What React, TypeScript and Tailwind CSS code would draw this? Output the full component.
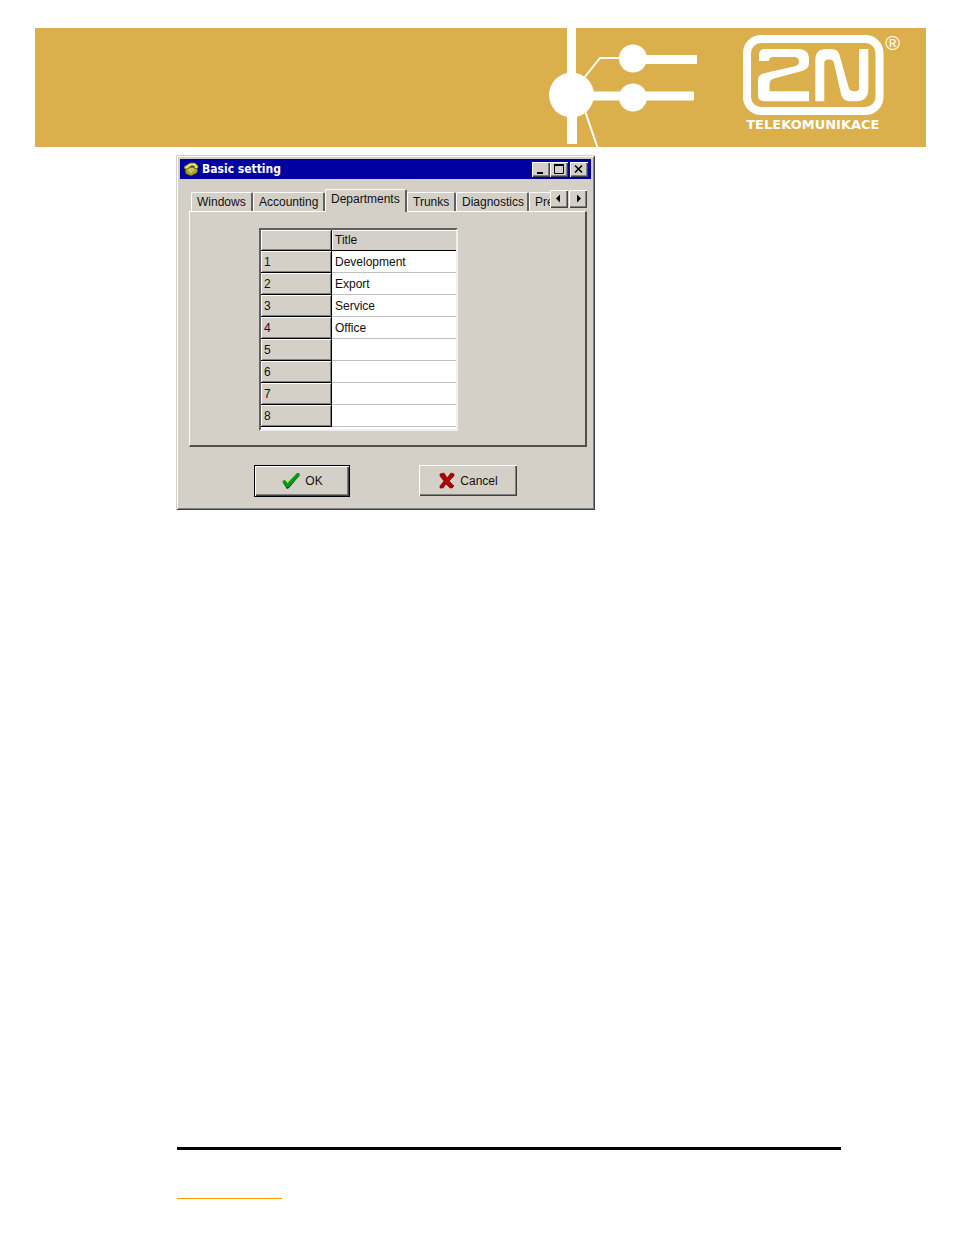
import { useState } from "react";

const tabs = [
  { name: "Windows", width: "w-[62px]" },
  { name: "Accounting", width: "w-[72px]" },
  { name: "Departments", width: "w-[82px]" },
  { name: "Trunks", width: "w-[49px]" },
  { name: "Diagnostics", width: "w-[73px]" },
  { name: "Pre", width: "w-[62px]" },
];

const departments = ["Development", "Export", "Service", "Office", "", "", "", ""];

const raised =
  "bg-[#d4d0c8] shadow-[inset_1px_1px_#fff,inset_-1px_-1px_#404040,inset_-2px_-2px_#808080]";

const Circuit = () => (
  <svg className="shrink-0" width="150" height="119" viewBox="0 0 150 119" fill="#fff">
    <rect x="19" y="0" width="9" height="70" />
    <rect x="19" y="67" width="10" height="49" />
    <circle cx="23.5" cy="67" r="22.5" />
    <rect x="24" y="63.5" width="122" height="9" />
    <circle cx="85" cy="69.5" r="14" />
    <rect x="85" y="27" width="64" height="9" />
    <circle cx="85" cy="30.5" r="14" />
    <path d="M36 50 L52 30 H72 M37 83 L50 121" fill="none" stroke="#fff" strokeWidth="2" />
  </svg>
);

const Logo = () => (
  <div className="shrink-0 pt-[7px] text-white">
    <div className="flex items-start">
      <svg width="142" height="80" viewBox="0 0 142 80" fill="#fff" role="img" aria-label="2N">
        <rect x="4" y="4" width="132.5" height="72" rx="14" fill="none" stroke="#fff" strokeWidth="8" />
        <path d="M16 26 V20 Q16 14 22 14 H55 Q66 14 66 24 V28 Q66 34 59 36 L31 43.5 Q26.500 44.700 26.500 49 V56.300 H66 V66.300 H22 Q15 66.300 15 60 V45 Q15 39.500 22 38 L51 31.500 Q56 30.200 56 26.500 Q56 22 51 22 H30 Q26 22 26 26 Z" />
        <path d="M72.300 66.300 V25 Q72.300 14 83 14 H88 Q95.300 14 96.500 20 L105.500 52 Q106.700 56.300 111 56.300 H113 Q116 56.300 116 53 V14 H125.300 V54 Q125.300 66.300 113 66.300 H107 Q99.500 66.300 98 59 L91 28 Q90.200 24.500 87 24.500 H85 Q81.300 24.500 81.300 28 V66.300 Z" />
      </svg>
      <span className="font-['Liberation_Sans'] text-[20px] leading-4">®</span>
    </div>
    <p className="pl-[3px] font-['DejaVu_Sans'] text-[13px] font-bold leading-5">TELEKOMUNIKACE</p>
  </div>
);

const PhoneIcon = () => (
  <svg width="16" height="16" viewBox="0 0 16 16">
    <path d="M2 9 L5 6 L12 6 L15 9 L14 12 L8 15 L3 13 Z" fill="#a8a028" stroke="#3c3808" strokeWidth=".8" />
    <path d="M1 6 L7 2 L12 2 L15 5 L15 7 L12 8 L11 5 L8 5 L4 8 L2 8 Z" fill="#e8e468" stroke="#666010" strokeWidth=".8" />
    <path d="M5 9 L9 7 L12 9 L8 12 Z" fill="#f0ec90" />
    <path d="M6.500 9.500 L9.500 10.500 M8 8.300 L11 9.500" stroke="#777018" strokeWidth=".7" />
  </svg>
);

const TitleBar = () => (
  <div className="flex h-5 items-center bg-[#0000a0] px-[3px] text-white">
    <PhoneIcon />
    <h1 className="flex-1 pl-[3px] font-['DejaVu_Sans_Condensed','DejaVu_Sans'] text-[12px] font-bold leading-4">
      Basic setting
    </h1>
    <button aria-label="Minimize" className={`h-[15px] w-[18px] ${raised}`}>
      <svg width="18" height="15"><path d="M5 11 H11" stroke="#000" strokeWidth="2" /></svg>
    </button>
    <button aria-label="Maximize" className={`h-[15px] w-[18px] ${raised}`}>
      <svg width="18" height="15">
        <path d="M4.500 3 V11.500 H13.500 V3" fill="none" stroke="#000" />
        <path d="M4 3 H14" stroke="#000" strokeWidth="2" />
      </svg>
    </button>
    <button aria-label="Close" className={`ml-[2px] h-[15px] w-[18px] ${raised}`}>
      <svg width="18" height="15"><path d="M5 3.500 L12 10.500 M12 3.500 L5 10.500" stroke="#000" strokeWidth="1.600" /></svg>
    </button>
  </div>
);

const DepartmentTable = () => (
  <div className="w-[199px] border-2 border-b-[#f0efec] border-l-[#606060] border-r-[#f0efec] border-t-[#606060] bg-white pb-[2px]">
    <table className="w-full table-fixed border-separate border-spacing-0 text-left">
      <thead>
        <tr className="bg-[#d4d0c8]">
          <th aria-label="Number" className="h-[21px] w-[71px] border-b border-r border-black p-0 shadow-[inset_1px_1px_#fff,inset_-1px_-1px_#808080]" />
          <th className="h-[21px] border-b border-black p-0 pl-[3px] font-normal shadow-[inset_1px_1px_#fff]">Title</th>
        </tr>
      </thead>
      <tbody>
        {departments.map((title, i) => (
          <tr key={i}>
            <th className="h-[22px] border-b border-r border-black bg-[#d4d0c8] p-0 pl-[3px] font-normal shadow-[inset_1px_1px_#fff,inset_-1px_-1px_#808080]">
              {i + 1}
            </th>
            <td className="h-[22px] border-b border-[#c0c0c0] p-0 pl-[3px]">{title}</td>
          </tr>
        ))}
      </tbody>
    </table>
  </div>
);

const SettingsWindow = () => {
  const [active, setActive] = useState("Departments");

  return (
    <section className="w-[419px] bg-[#d4d0c8] p-1 pb-[13px] font-['Liberation_Sans',sans-serif] text-[12px] leading-4 text-[#101010] shadow-[inset_1px_1px_#d4d0c8,inset_-1px_-1px_#404040,inset_2px_2px_#fff,inset_-2px_-2px_#808080]">
      <TitleBar />
      <div className="pl-[9px] pr-1 pt-[10px]">
        <div className="flex h-[22px] items-end">
          <div role="tablist" className="relative flex min-w-0 flex-1 items-end overflow-x-clip pl-[2px]">
            {tabs.map((tab) => (
              <button
                key={tab.name}
                role="tab"
                aria-selected={tab.name === active}
                onClick={() => setActive(tab.name)}
                className={`shrink-0 rounded-t-[2px] border-l border-r-2 border-t border-l-white border-r-[#606060] border-t-white bg-[#d4d0c8] pl-[5px] text-left ${tab.width} ${
                  tab.name === active ? "-mb-px h-[23px] pb-1" : "h-[19px]"
                }`}
              >
                {tab.name}
              </button>
            ))}
          </div>
          <div className="mb-[3px] flex gap-px">
            <button aria-label="Scroll tabs left" className={`h-[18px] w-[18px] ${raised}`}>
              <svg width="18" height="18"><path d="M10 4.500 V12.500 L6 8.500 Z" /></svg>
            </button>
            <button aria-label="Scroll tabs right" className={`h-[18px] w-[18px] ${raised}`}>
              <svg width="18" height="18"><path d="M8 4.500 V12.500 L12 8.500 Z" /></svg>
            </button>
          </div>
        </div>
        <div
          role="tabpanel"
          className="border-b-2 border-l border-r-2 border-t border-b-[#505050] border-l-white border-r-[#505050] border-t-white pb-[14px] pl-[69px] pt-4"
        >
          <DepartmentTable />
        </div>
      </div>
      <div className="mt-[18px] flex gap-[69px] pl-[74px]">
        <button className="flex h-8 w-24 items-center justify-center gap-1 border border-black bg-[#d4d0c8] shadow-[inset_1px_1px_#fff,inset_-1px_-1px_#404040,inset_-2px_-2px_#808080]">
          <svg width="20" height="18" viewBox="0 0 20 18">
            <path d="M2 11 L4 9 L7 12 L17 2 L19 3 L8 16 L6 17 Z" fill="#102878" />
            <path d="M1 9 L4 8 L6.500 11 L16 1 L18.500 1 L18 4 L7 15.500 L5 15 Z" fill="#00a000" />
          </svg>
          OK
        </button>
        <button className={`flex h-[31px] w-[98px] items-center justify-center gap-1 ${raised}`}>
          <svg width="18" height="18" viewBox="0 0 18 18">
            <path d="M2 2 L6 1 L9 6 L13 1 L16 2 L16 4 L11 9 L16 14 L14 16 L12 16 L8 12 L5 16 L2 16 L2 14 L6 9 L2 4 Z" fill="#b00000" stroke="#700808" strokeWidth=".7" />
          </svg>
          Cancel
        </button>
      </div>
    </section>
  );
};

export default function App() {
  return (
    <div className="flex min-h-screen flex-col bg-white">
      <header className="ml-[35px] mr-7 mt-7 flex h-[119px] justify-end gap-[45px] bg-[#dbb04c] pr-[26px]">
        <Circuit />
        <Logo />
      </header>
      <main className="ml-[176px] mt-2">
        <SettingsWindow />
      </main>
      <footer className="ml-[177px] mr-[113px] mt-auto pb-9">
        <hr className="border-t-[3px] border-black" />
        <div className="mt-12 w-[105px] border-t border-[#ff9900]" />
      </footer>
    </div>
  );
}
